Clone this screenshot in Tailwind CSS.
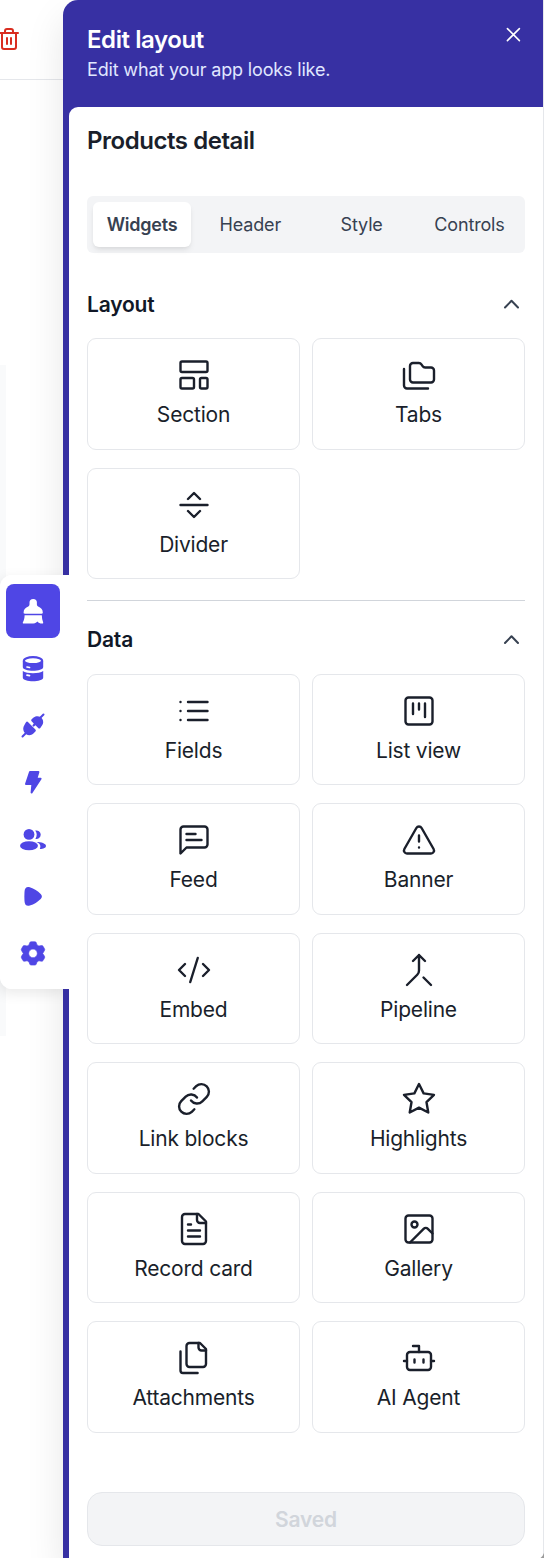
<!DOCTYPE html>
<html lang="en">
<head>
<meta charset="utf-8">
<title>Edit layout</title>
<script src="https://cdn.jsdelivr.net/npm/@tailwindcss/browser@4"></script>
</head>
<body class="bg-white">
<div class="relative flex h-[1558px] w-[544px] overflow-hidden bg-white font-['Inter',sans-serif] text-[#1a1f2b]">

  <!-- Page behind the panel -->
  <div class="flex w-[63px] shrink-0 flex-col">
    <div class="flex h-20 items-center border-b border-[#e5e7eb] pb-px">
      <svg class="-ml-[3px] size-6 text-[#d92d20]" viewBox="0 0 24 24" fill="none" stroke="currentColor" stroke-width="2" stroke-linecap="round" stroke-linejoin="round"><path d="M3 6h18"/><path d="M19 6v14a2 2 0 0 1-2 2H7a2 2 0 0 1-2-2V6"/><path d="M8 6V4a2 2 0 0 1 2-2h4a2 2 0 0 1 2 2v2"/><path d="M10 11v6"/><path d="M14 11v6"/></svg>
    </div>
    <div class="mt-[285px] h-[671px] w-1.5 bg-[#f9fafb]"></div>
  </div>

  <!-- Panel -->
  <aside class="flex w-[480px] shrink-0 flex-col rounded-tl-[15px] bg-[#3730a3] shadow-[0_18px_38px_rgba(0,0,0,0.1)]">
    <header class="flex h-[107px] shrink-0 justify-between pt-6 pr-[18px] pl-6">
      <div>
        <h1 class="text-[24px] leading-[31px] font-semibold tracking-[-0.42px] text-white">Edit layout</h1>
        <p class="text-[18px] leading-[30px] tracking-[-0.16px] text-[#e0e7ff]">Edit what your app looks like.</p>
      </div>
      <svg class="-mt-[1px] size-6 text-white" viewBox="0 0 24 24" fill="none" stroke="currentColor" stroke-width="1.6" stroke-linecap="round"><path d="M6.400 5.600l12 12M18.400 5.600l-12 12"/></svg>
    </header>

    <main class="ml-1.5 flex flex-1 flex-col rounded-tl-[9px] bg-white pr-[18px] pl-[18px]">
      <h2 class="mt-[18px] text-[24px] leading-[32px] font-semibold tracking-[-0.45px]">Products detail</h2>

      <nav class="mt-[39px] flex h-[57px] items-center justify-between rounded-md bg-[#f3f4f6] p-1.5 text-[18px] tracking-[-0.15px] text-[#374151]">
        <div class="flex h-[45px] w-[98px] items-center justify-center rounded-md bg-white font-semibold tracking-[-0.25px] shadow-md shadow-black/8">Widgets</div>
        <div class="flex w-[98px] justify-center pr-0.5">Header</div>
        <div class="flex w-[98px] justify-center pl-0.5">Style</div>
        <div class="flex w-[98px] justify-center pr-px">Controls</div>
      </nav>

      <section>
        <div class="mt-9 flex h-[30px] items-center justify-between pr-[5px]">
          <h3 class="pt-[2px] text-[21px] font-semibold tracking-[-0.2px] text-[#111827]">Layout</h3>
          <svg class="size-[18px] text-[#374151]" viewBox="0 0 18 18" fill="none" stroke="currentColor" stroke-width="2" stroke-linecap="round" stroke-linejoin="round"><path d="M3 12.500l6.500-6.700 6.500 6.700"/></svg>
        </div>
        <div class="mt-[19px] grid grid-cols-2 gap-x-3 gap-y-[18px]" id="layout-grid"></div>
      </section>

      <hr class="mt-[21px] border-[#d1d5db]">

      <section>
        <div class="mt-6 flex h-[30px] items-center justify-between pr-[5px]">
          <h3 class="text-[21px] font-semibold tracking-[-0.2px] text-[#111827]">Data</h3>
          <svg class="size-[18px] text-[#374151]" viewBox="0 0 18 18" fill="none" stroke="currentColor" stroke-width="2" stroke-linecap="round" stroke-linejoin="round"><path d="M3 12l6.500-6.700 6.500 6.700"/></svg>
        </div>
        <div class="mt-[18.6px] grid grid-cols-2 gap-x-3 gap-y-[18px]" id="data-grid"></div>
      </section>

      <button class="mt-[59.4px] flex h-[54px] shrink-0 items-center justify-center rounded-[15px] border border-[#e5e7eb] bg-[#f3f4f6] pt-[2px] text-[21px] font-semibold tracking-[-0.2px] text-[#d1d5db]">Saved</button>
    </main>
  </aside>
  <div class="w-px bg-[#e5e7eb]"></div>

  <!-- Floating tool rail over the panel edge -->
  <div class="absolute top-[575px] left-0 h-[414px] w-[69px] rounded-l-[12px] shadow-[-3px_4px_14px_rgba(0,0,0,0.09)] [clip-path:inset(-20px_6px_-20px_-20px)]"></div>
  <nav class="absolute top-[575px] left-0 flex h-[414px] w-[69px] flex-col gap-[3px] rounded-l-[12px] bg-white py-[9px] pl-1.5 text-[#4f46e5]">
    <div class="flex size-[54px] items-center justify-center rounded-lg bg-[#4f46e5] text-white">
      <svg class="size-[30px]" viewBox="0 0 30 30" fill="currentColor"><path d="M11.500 6.600a3.700 3.700 0 0 1 7.400 0c0 1.600-.3 3.200 1.200 3.900 2.700 1.200 4.700 2.700 4.700 6 0 .8-.4 1.200-1.100 1.200H6.700c-.7 0-1.100-.4-1.100-1.200 0-3.300 2-4.800 4.700-6 1.500-.7 1.200-2.300 1.200-3.900z"/><path d="M6.600 19.300h17.200c.1 2.600.5 4.900 1.300 7 .4 1-.1 1.400-1 1.300-2.300-.1-3.500-.8-4.600-2.200-1.700 1.700-3.400 2.200-6 2.200H5.800c-.9 0-1.300-.4-.9-1.300 1.100-2.100 1.700-4.400 1.700-7z"/></svg>
    </div>
    <div class="flex size-[54px] items-center justify-center">
      <svg class="mt-[1.500px] size-[30px]" viewBox="0 0 30 30"><path fill="currentColor" d="M4.800 7v6c0 5 20.400 5 20.400 0V7z"/><path fill="currentColor" d="M4.800 17c4 3 16.400 3 20.400 0v6.500c0 5-20.400 5-20.400 0z"/><ellipse cx="15" cy="6.700" rx="9.100" ry="3.500" fill="white" stroke="currentColor" stroke-width="2.200"/><path d="M9 13l2.500.5M9 21.200l2.500.5" stroke="white" stroke-width="1.700" stroke-linecap="round"/></svg>
    </div>
    <div class="flex size-[54px] items-center justify-center">
      <svg class="size-[30px]" viewBox="0 0 30 30" fill="currentColor"><path d="M4.500 26.500l3-3M22.500 7.500l3-3" stroke="currentColor" stroke-width="2" stroke-linecap="round"/><path d="M8 12.200q1-1.200 2.200 0l7.200 7.300q1 1.100 0 2l-2 2c-5.500 5-13.500-2.500-8.700-9z"/><path d="M22.300 18q-1 1.100-2.100 0l-2.700-2.800-1.900 1.500-1.300-1.300 1.500-1.900-2.200-2.200q-1-1 0-2l2-1.700c5.500-4.500 12.500 2.500 8.400 8z"/></svg>
    </div>
    <div class="flex size-[54px] items-center justify-center">
      <svg class="size-[30px]" viewBox="0 0 30 30" fill="currentColor" stroke="currentColor" stroke-width="2" stroke-linejoin="round"><path d="M12 5h8.400l-2 6.800h4.200L13.600 25.500l.8-8.500H8z"/></svg>
    </div>
    <div class="flex size-[54px] items-center justify-center">
      <svg class="mt-[2px] size-[30px]" viewBox="0 0 30 30" fill="currentColor"><circle cx="11" cy="9.400" r="5.400"/><ellipse cx="11" cy="20.800" rx="9" ry="4.500"/><path d="M17.200 5.600a4.300 4.300 0 1 1 .2 8.300c1.800-2.700 1.800-5.800-.2-8.300z"/><path d="M18.300 17c5 0 9.700 1.500 9.700 4 0 1.700-2.400 2.900-6.200 3 1.400-3 .5-5.500-3.500-7z"/></svg>
    </div>
    <div class="flex size-[54px] items-center justify-center">
      <svg class="size-[30px]" viewBox="0 0 30 30" fill="currentColor"><path d="M6.500 10.900c.1-4 2.300-5.600 5.300-4.600 4.400 1.400 7.800 3.600 10.900 6.600 1.600 1.500 1.600 3.500 0 5-3.100 3-6.500 5.200-10.900 6.600-3 1-5.200-.6-5.300-4.600-.2-3-.2-6 0-9z"/></svg>
    </div>
    <div class="flex size-[54px] items-center justify-center">
      <svg class="size-[30px]" viewBox="0 0 30 30" fill="currentColor" stroke="currentColor" stroke-width=".6" stroke-linejoin="round" fill-rule="evenodd"><path transform="translate(0 .4)" d="M13.200 3.300h3.600q1.200 0 1.500 1l.7 2.200 1.900 1.100 2.500-.5q1.100-.2 1.700.8l1.400 2.500q.6 1-.1 1.900L24.700 15l1.700 2.700q.7.900.1 1.900l-1.400 2.500q-.6 1-1.700.8l-2.500-.5-1.900 1.100-.7 2.200q-.3 1-1.500 1h-3.600q-1.200 0-1.500-1l-.7-2.200-1.900-1.100-2.500.5q-1.100.2-1.700-.8l-1.400-2.500q-.6-1 .1-1.900L5.300 15l-1.700-2.700q-.7-.9-.1-1.900l1.400-2.500q.6-1 1.700-.8l2.500.5L11 6.500l.7-2.200q.3-1 1.500-1zM15 10.700a4.300 4.300 0 1 0 0 8.600 4.300 4.300 0 0 0 0-8.600z"/></svg>
    </div>
  </nav>

  <!-- Resize corner -->
  <svg class="absolute right-0 bottom-0 size-1.5" viewBox="0 0 6 6"><path d="M6 0v6H2.500Q5 4 6 1z" fill="#9a9a9a"/></svg>
</div>

<script>
const layoutItems = [
  ['Section', '<rect width="18" height="7" x="3" y="3" rx="1"/><rect width="9" height="7" x="3" y="14" rx="1"/><rect width="5" height="7" x="16" y="14" rx="1"/>'],
  ['Tabs', '<path d="M20 17a2 2 0 0 0 2-2V9a2 2 0 0 0-2-2h-3.900a2 2 0 0 1-1.690-.9l-.81-1.200a2 2 0 0 0-1.670-.9H8a2 2 0 0 0-2 2v9a2 2 0 0 0 2 2Z"/><path d="M2 8v11a2 2 0 0 0 2 2h14"/>'],
  ['Divider', '<path d="M3 12h18M8 8l4-4 4 4M16 16l-4 4-4-4"/>'],
];
const dataItems = [
  ['Fields', '<path d="M8 6h13M8 12h13M8 18h13M3 6h.01M3 12h.01M3 18h.01"/>'],
  ['List view', '<rect width="18" height="18" x="3" y="3" rx="2"/><path d="M8 7v7M12 7v4M16 7v9"/>'],
  ['Feed', '<path d="M21 15a2 2 0 0 1-2 2H7l-4 4V5a2 2 0 0 1 2-2h14a2 2 0 0 1 2 2zM13 8H7M17 12H7"/>'],
  ['Banner', '<path d="m21.730 18-8-14a2 2 0 0 0-3.480 0l-8 14A2 2 0 0 0 4 21h16a2 2 0 0 0 1.730-3M12 9v4M12 17h.01"/>'],
  ['Embed', '<path d="m18 16 4-4-4-4M6 8l-4 4 4 4M14.500 4l-5 16"/>'],
  ['Pipeline', '<path d="m8 6 4-4 4 4M12 2v10.300a4 4 0 0 1-1.172 2.872L4 22M20 22l-5-5"/>'],
  ['Link blocks', '<path d="M10 13a5 5 0 0 0 7.540.54l3-3a5 5 0 0 0-7.070-7.070l-1.720 1.710"/><path d="M14 11a5 5 0 0 0-7.540-.54l-3 3a5 5 0 0 0 7.070 7.070l1.710-1.710"/>'],
  ['Highlights', '<polygon points="12 2 15.090 8.260 22 9.270 17 14.140 18.180 21.020 12 17.770 5.820 21.020 7 14.140 2 9.270 8.910 8.260 12 2"/>'],
  ['Record card', '<path d="M15 2H6a2 2 0 0 0-2 2v16a2 2 0 0 0 2 2h12a2 2 0 0 0 2-2V7Z"/><path d="M14 2v4a2 2 0 0 0 2 2h4M10 9H8M16 13H8M16 17H8"/>'],
  ['Gallery', '<rect width="18" height="18" x="3" y="3" rx="2"/><circle cx="9" cy="9" r="2"/><path d="m21 15-3.086-3.086a2 2 0 0 0-2.828 0L6 21"/>'],
  ['Attachments', '<path d="M20 7h-3a2 2 0 0 1-2-2V2"/><path d="M9 18a2 2 0 0 1-2-2V4a2 2 0 0 1 2-2h7l4 4v10a2 2 0 0 1-2 2Z"/><path d="M3 7.600v12.800A1.600 1.600 0 0 0 4.600 22h9.800"/>'],
  ['AI Agent', '<path d="M12 8V4H8"/><rect width="16" height="12" x="4" y="8" rx="2"/><path d="M2 14h2M20 14h2M15 13v2M9 13v2"/>'],
];
const card = ([label, icon]) => `
  <div class="flex h-[111.5px] flex-col items-center rounded-[9px] border border-[#e5e7eb] pt-[18px]">
    <svg class="size-9 shrink-0" viewBox="0 0 24 24" fill="none" stroke="currentColor" stroke-width="1.6" stroke-linecap="round" stroke-linejoin="round">${icon}</svg>
    <span class="mt-[7px] text-[21px] leading-[30px] tracking-[-0.2px]">${label}</span>
  </div>`;
document.getElementById('layout-grid').innerHTML = layoutItems.map(card).join('');
document.getElementById('data-grid').innerHTML = dataItems.map(card).join('');
</script>
</body>
</html>
